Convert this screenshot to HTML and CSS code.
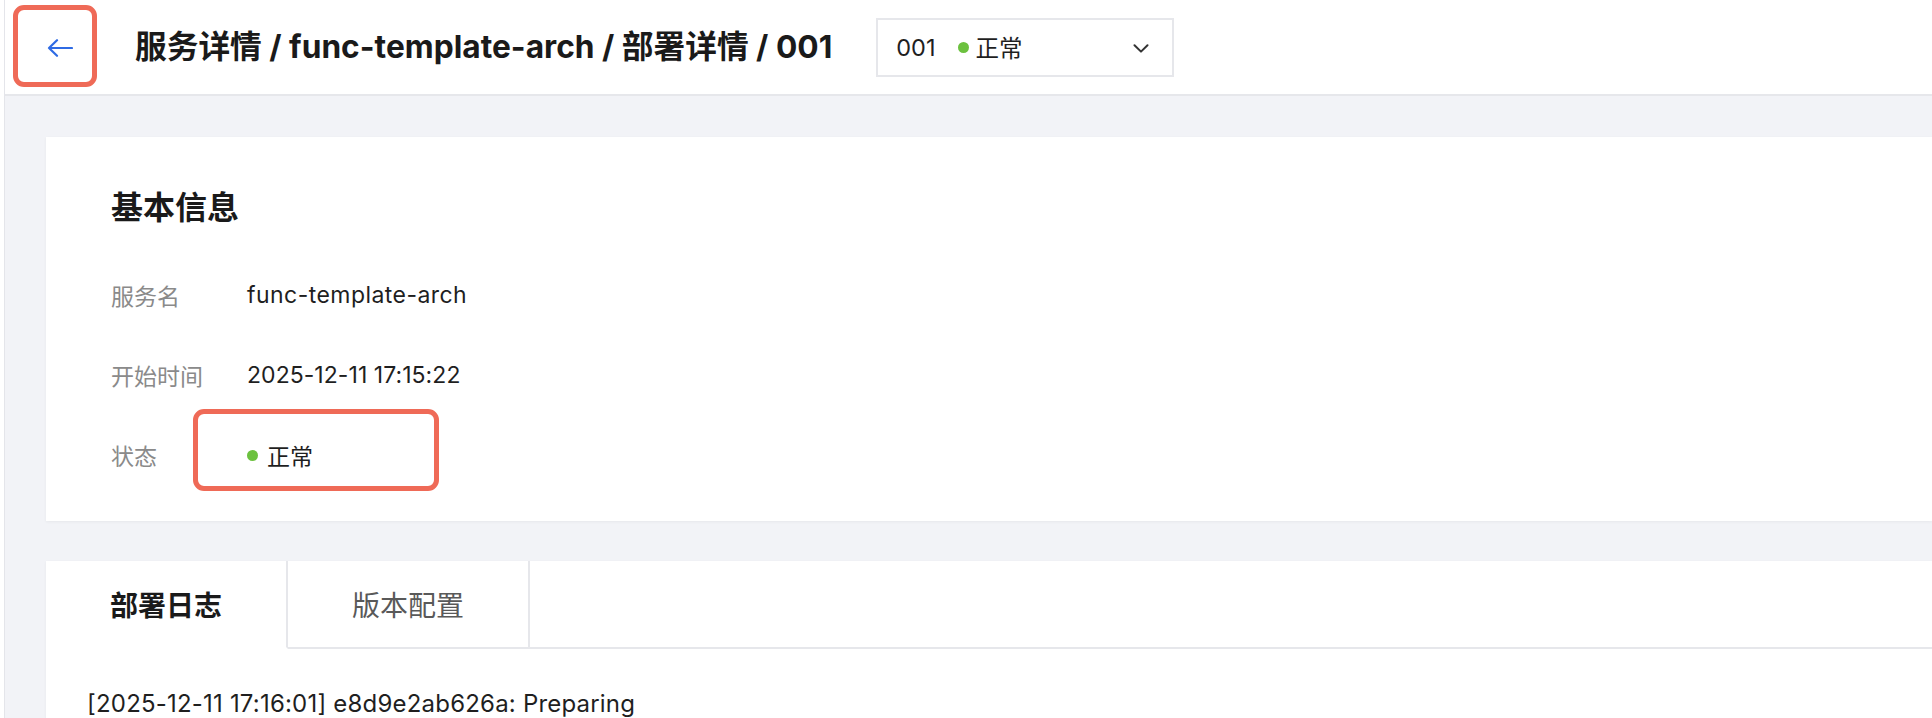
FILE: index.html
```html
<!DOCTYPE html>
<html lang="zh-CN">
<head>
<meta charset="utf-8">
<title>部署详情</title>
<link rel="stylesheet" href="styles.css">
</head>
<body>
<div class="app">
  <aside class="rail"></aside>
  <div class="main">
    <header class="topbar">
      <button class="back-btn" aria-label="返回">
        <svg width="26" height="18" viewBox="0 0 26 18" fill="none" stroke="#2f6be4" stroke-width="2.2" stroke-linecap="round" stroke-linejoin="round"><path d="M25 9H2M10 1.2L2 9l8 7.8"/></svg>
      </button>
      <h1 class="page-title">服务详情 / func-template-arch / 部署详情 / 001</h1>
      <div class="version-select">
        <span class="vs-id">001</span>
        <span class="status"><i class="dot"></i>正常</span>
        <svg class="chevron" width="16" height="9" viewBox="0 0 16 9" fill="none" stroke="#333" stroke-width="2" stroke-linecap="round" stroke-linejoin="round"><path d="M1.5 1.2L8 7.6l6.5-6.4"/></svg>
      </div>
    </header>
    <div class="content">
      <section class="card info-card">
        <h2 class="card-title">基本信息</h2>
        <dl class="info-list">
          <div class="info-row"><dt>服务名</dt><dd class="val-name">func-template-arch</dd></div>
          <div class="info-row"><dt>开始时间</dt><dd>2025-12-11 17:15:22</dd></div>
          <div class="info-row"><dt>状态</dt><dd class="status-cell"><span class="status"><i class="dot"></i>正常</span></dd></div>
        </dl>
      </section>
      <section class="card tabs-card">
        <div class="tabs">
          <div class="tab active">部署日志</div>
          <div class="tab">版本配置</div>
          <div class="tab-fill"></div>
        </div>
        <div class="log">
          <div class="log-line">[2025-12-11 17:16:01] e8d9e2ab626a: Preparing</div>
        </div>
      </section>
    </div>
  </div>
</div>
</body>
</html>
```
FILE: styles.css
```css
*, *::before, *::after { box-sizing: border-box; }
html, body { margin: 0; padding: 0; height: 100%; }
body {
  font-family: "Inter", "Noto Sans CJK SC", sans-serif;
  color: #1f1f1f;
  background: #fff;
  overflow: hidden;
}
.app { display: flex; height: 100vh; overflow: hidden; }
.rail { width: 5px; flex: none; background: #fff; border-right: 1px solid #e4e5ea; }
.main { flex: 1; background: #f2f3f7; display: flex; flex-direction: column; min-width: 0; min-height: 0; overflow: hidden; }

.topbar {
  height: 96px;
  flex: none;
  background: #fff;
  border-bottom: 2px solid #e6e7eb;
  display: flex;
  align-items: center;
}
.back-btn {
  align-self: flex-start;
  margin: 5px 0 0 8px;
  width: 84px;
  height: 82px;
  border: 5px solid #ef6a57;
  border-radius: 11px;
  background: #fff;
  padding: 4px 0 0 10px;
  display: flex;
  align-items: center;
  justify-content: center;
  cursor: pointer;
}
.page-title {
  margin: 0 0 0 38px;
  font-size: 31.7px;
  font-weight: 700;
  color: #1a1a1a;
  white-space: nowrap;
  line-height: 40px;
}
.version-select {
  margin-left: 44px;
  width: 298px;
  height: 59px;
  border: 2px solid #e6e7eb;
  display: flex;
  align-items: center;
  padding: 0 23px 0 18px;
  font-size: 23.5px;
  color: #1f1f1f;
}
.vs-id { margin-right: 22px; }
.chevron { margin-left: auto; margin-top: 2px; }
.status { display: inline-flex; align-items: center; }
.dot {
  width: 11px;
  height: 11px;
  border-radius: 50%;
  background: #6cc13f;
  margin-right: 7px;
  display: inline-block;
}

.content {
  flex: 1;
  padding: 41px 0 0 41px;
  display: flex;
  flex-direction: column;
  gap: 40px;
  min-height: 0;
}
.card {
  background: #fff;
  box-shadow: 0 1px 3px rgba(0, 0, 0, 0.05);
}
.info-card { padding: 51px 0 26px 65px; flex: none; }
.card-title {
  margin: 0 0 27px;
  font-size: 32px;
  line-height: 40px;
  font-weight: 700;
  color: #1a1a1a;
}
.info-list { margin: 0; }
.info-row { display: flex; align-items: center; height: 80px; font-size: 23px; }
.info-row dt { width: 136px; color: #8a8a8a; }
.info-row dd { margin: 0; color: #1f1f1f; letter-spacing: 0.05px; }
.info-row dd.val-name { letter-spacing: 0.45px; }
.status-cell { position: relative; }
.status-cell .dot { width: 11px; height: 11px; margin-right: 9px; }
.status-cell::after {
  content: "";
  position: absolute;
  left: -54px;
  top: -29px;
  width: 246px;
  height: 82px;
  border: 5px solid #ef6a57;
  border-radius: 11px;
  pointer-events: none;
}

.tabs-card { flex: 1; min-height: 0; overflow: hidden; }
.tabs { display: flex; height: 88px; }
.tab {
  width: 242px;
  display: flex;
  align-items: center;
  justify-content: center;
  font-size: 28px;
  color: #595959;
  border-right: 2px solid #e6e7eb;
  border-bottom: 2px solid #e6e7eb;
}
.tab.active { color: #1a1a1a; font-weight: 700; border-bottom-color: transparent; }
.tab-fill { flex: 1; border-bottom: 2px solid #e6e7eb; }
.log { padding: 41px 41px; }
.log-line { font-size: 24px; line-height: 28px; letter-spacing: 0.2px; color: #1f1f1f; }
```
